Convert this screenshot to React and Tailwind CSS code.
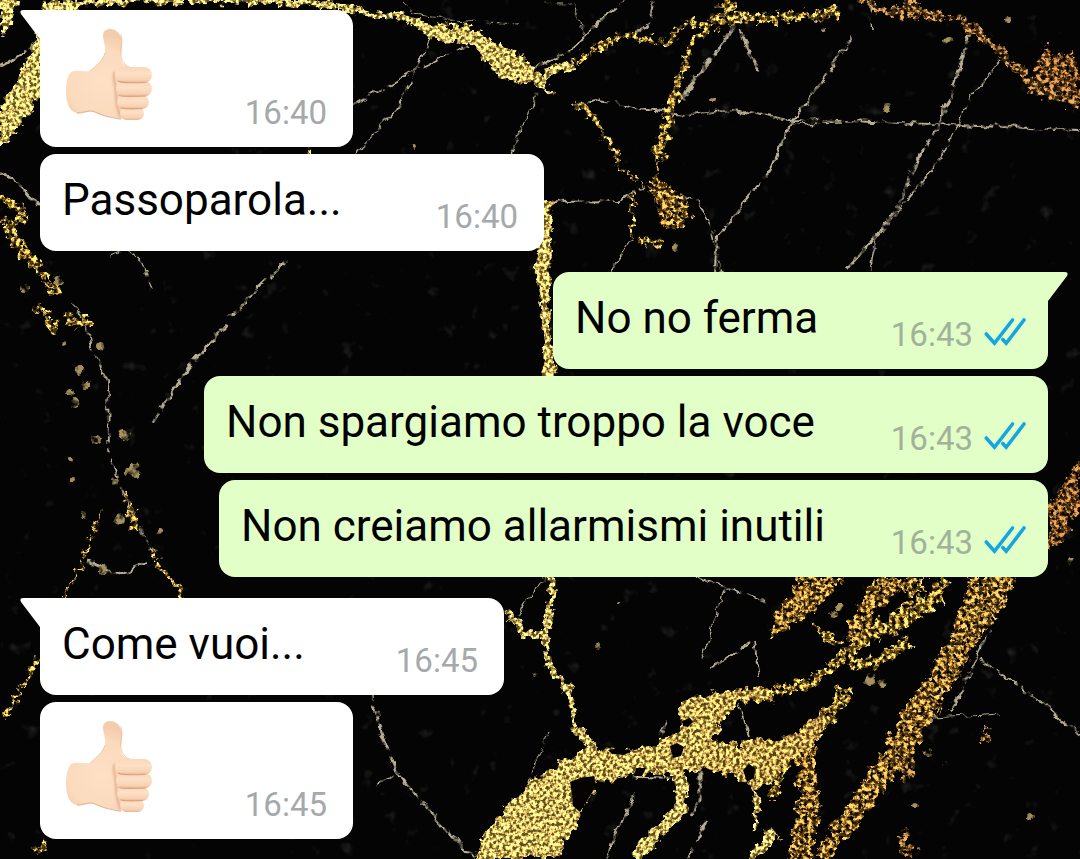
import React from "react";

/* ---------- Wallpaper: black marble with gold veins ---------- */

// Broad gold areas, drawn as closed shapes.
const goldShapes = [
  "M0 0H18L8 30L0 42Z",
  "M45 0H82L66 24L50 60L42 92L30 112L10 138L0 150V108L14 88L26 62L36 36Z",
  "M340 3L375 11L408 15L440 25L475 27L500 44L530 63L541 78L536 84L510 82L490 65L470 44L430 38L405 20L370 17L340 10Z",
  "M541 200H553L551 250L550 300L556 376H544L541 300L534 272L538 245Z",
  "M475 859L482 838L508 802L538 776L568 758L592 745L628 752L655 746L680 728L678 706L694 696L730 690L772 687V699L738 702L720 722L713 742L740 744L775 738L800 732L812 716L826 720L815 748L790 760L772 784L752 790L735 776L700 768L680 776L630 776L598 782L582 812L556 859Z",
];
const bronzeShapes = [
  "M650 180L665 182L680 196L691 214L688 226L674 233L662 225L658 205L646 192Z",
  "M796 738L815 735L814 768L820 806L812 859H788L796 820L799 790Z",
  "M970 577H1016L1000 612L972 652L942 702L902 768L852 832L828 859H814L832 826L874 766L912 696L944 650L960 612Z",
  "M800 577H846L828 596L806 618L786 628L768 642L778 612Z",
  "M876 577H922L896 594L874 612L862 650L846 662L850 622Z",
];
const rustShapes = [
  "M1080 455V508L1062 540L1048 552V506L1066 482Z",
  "M1044 44L1054 58L1074 50L1080 84V106L1052 100L1032 94L1014 72L1034 74Z",
];

// Gold lines: [path, width]
const goldLines = [
  ["M70 4Q200 -6 345 6", 7],
  ["M540 82L560 66L575 66", 9],
  ["M535 82L554 95", 4],
  ["M552 577L550 610L544 640", 8],
  ["M506 612L515 620L522 632L544 638L548 664L564 684L572 704L575 728L592 746", 6],
  ["M566 684L572 706", 9],
  ["M680 776L682 808L660 830L636 859", 12],
  ["M775 832L750 859", 12],
  ["M745 775L757 802L755 832", 5],
];
const bronzeLines = [
  ["M575 64L600 46L625 35L650 40L668 44L676 30L690 23L712 26", 6],
  ["M575 103L595 117L604 136L615 148L618 165", 5],
  ["M618 162L640 184L652 188", 2],
  ["M710 24L692 44L682 70L673 104", 6],
  ["M676 92L666 128L658 156", 12],
  ["M660 150L656 182", 4],
  ["M632 190V240", 4],
  ["M640 240L662 246", 6],
  ["M700 30L728 16L765 18L800 16L838 13", 11],
  ["M722 0L732 12", 16],
  ["M944 577L930 606L896 628L866 640L842 658L812 682L762 697", 11],
  ["M940 596L900 616L870 638", 16],
  ["M910 640L880 660L850 664", 10],
  ["M846 686L836 706L816 730", 14],
  ["M812 625L842 646", 5],
  ["M770 797L784 762L800 744", 12],
  ["M905 590L925 586", 12],
  ["M15 236L34 262L56 294", 7],
  ["M0 196L26 216L8 224L26 260", 9],
  ["M34 305L48 316L56 334", 7],
  ["M65 320L92 324", 9],
  ["M124 492L136 520", 5],
  ["M130 512L136 530", 9],
  ["M150 550L165 572L186 600", 5],
  ["M102 512L82 560L64 600", 3],
  ["M38 658L22 688L4 718", 5],
  ["M48 840L36 852", 7],
  ["M310 145V156", 8],
];
const rustLines = [
  ["M860 -2L886 12L930 15L962 20", 9],
  ["M900 4L918 10", 14],
  ["M962 20L992 44L1010 62L1040 88L1080 106", 9],
  ["M982 735L990 736", 16],
  ["M905 740L908 780", 12],
  ["M904 830L906 859", 9],
  ["M970 600L945 660L900 730", 8],
];

// Thin pale cracks: [path, width]
const cracks = [
  ["M0 66L20 55L38 42", 3],
  ["M0 172L18 182L38 206", 2.5],
  ["M402 0L414 14L450 20L520 24", 1],
  ["M468 45L420 68L353 106", 1.8],
  ["M428 40L414 76L396 110L356 154", 1.8],
  ["M538 90L522 128L512 154", 1.5],
  ["M532 70L574 48L600 20L626 0", 2.4],
  ["M584 34L574 4H545", 1],
  ["M654 0L648 22L636 34", 2],
  ["M573 105L600 100L640 108L690 115L732 110L790 120L846 121L930 124L1080 130", 2.2],
  ["M790 124L842 123", 1.5],
  ["M742 16L714 56L696 76L682 100", 3.5],
  ["M740 30L750 54L760 72", 3],
  ["M852 38L816 90L792 120L770 172L740 206L718 236L716 272", 2.2],
  ["M868 0L872 30", 1.5],
  ["M970 34L952 90L936 130L914 165L900 205L885 225L848 270", 3],
  ["M1002 58L968 102L944 152L920 186L900 210L876 240L870 272", 1.5],
  ["M680 196L698 200L712 230L722 272", 1.5],
  ["M553 202L620 201L630 192L646 188", 2],
  ["M632 238L610 272", 1.5],
  ["M286 262L252 294L222 328L188 368L153 422", 3],
  ["M110 256L128 249L142 262L150 290", 1.2],
  ["M70 300L84 318L94 355L108 380L109 450L122 492L136 520L152 552", 1.8],
  ["M88 562L120 574L146 562", 3],
  ["M370 690L380 730L396 770L420 800L450 834L474 859", 2.6],
  ["M376 784L396 776", 2],
  ["M545 577L518 614", 1.5],
  ["M528 782L550 732", 1.2],
  ["M636 792L604 859", 1.8],
  ["M660 736L668 722", 3],
  ["M695 577L735 590L765 600", 1.8],
  ["M726 585L702 660", 1.2],
  ["M750 642L710 670", 2.2],
  ["M755 640L760 678", 1.8],
  ["M738 704L750 736", 1.8],
  ["M700 770V800L690 816", 3],
  ["M980 660L1040 700L1080 736", 2],
  ["M990 630L950 712", 2.4],
  ["M934 718L1000 714", 1],
  ["M600 776L680 778", 2],
  ["M688 859L706 820", 2.4],
  ["M970 600L988 620", 2],
];

const specks = [
  [80, 370, 5], [86, 384, 4], [70, 392, 3], [74, 402, 5], [101, 346, 4], [96, 440, 5],
  [125, 434, 6], [134, 470, 7], [126, 474, 3], [70, 460, 3], [72, 478, 3], [116, 481, 4],
  [120, 520, 5], [83, 516, 3], [160, 532, 3], [104, 570, 4], [24, 288, 4], [58, 280, 4],
  [54, 244, 3], [64, 343, 2], [618, 604, 2], [597, 645, 3], [535, 675, 2], [676, 248, 4],
  [887, 108, 4], [948, 40, 4], [1008, 20, 3], [825, 30, 3], [712, 100, 3], [916, 806, 3],
  [945, 763, 2], [1030, 818, 3], [918, 850, 2], [240, 558, 2], [414, 148, 2], [376, 15, 3],
  [838, 608, 4], [832, 616, 4], [870, 680, 5], [882, 682, 4], [930, 720, 3], [928, 752, 4],
  [1072, 560, 3],
];

// Dark islands inside the gold mass.
const holes = [
  "M570 782L580 778L594 776L596 786L590 796L580 812L573 806L572 794Z",
  "M670 746L677 743L684 747L681 756L673 758Z",
  "M682 721L690 718L693 722L688 727L683 726Z",
  "M608 750L620 748L632 751L624 755L612 754Z",
  "M636 768L646 768L642 776H634Z",
  "M743 770L749 764L755 768L754 778L747 782Z",
  "M702 768L712 770L716 800L708 790Z",
];

function Marble() {
  return (
    <svg
      className="absolute inset-0 h-full w-full"
      viewBox="0 0 1080 859"
      preserveAspectRatio="xMidYMid slice"
      aria-hidden="true"
    >
      <defs>
        <filter id="glitter" filterUnits="userSpaceOnUse" x="0" y="0" width="1080" height="859" colorInterpolationFilters="sRGB">
          <feTurbulence type="fractalNoise" baseFrequency="0.11" numOctaves="3" seed="4" result="warp" />
          <feDisplacementMap in="SourceGraphic" in2="warp" scale="15" xChannelSelector="R" yChannelSelector="G" result="shape" />
          <feTurbulence type="fractalNoise" baseFrequency="0.3" numOctaves="2" seed="9" result="grain" />
          <feColorMatrix in="grain" type="matrix" values="3.4 0 0 0 -1.2  3.4 0 0 0 -1.2  3.4 0 0 0 -1.2  0 0 0 0 1" result="light" />
          <feComposite in="light" in2="shape" operator="arithmetic" k1="0.85" k2="0.22" k3="0.46" k4="-0.03" result="lit" />
          <feComposite in="lit" in2="shape" operator="in" result="gilt" />
          <feGaussianBlur in="gilt" stdDeviation="0.5" />
        </filter>
        <filter id="flakes" filterUnits="userSpaceOnUse" x="0" y="0" width="1080" height="859" colorInterpolationFilters="sRGB">
          <feTurbulence type="fractalNoise" baseFrequency="0.11" numOctaves="3" seed="7" result="warp" />
          <feDisplacementMap in="SourceGraphic" in2="warp" scale="17" xChannelSelector="R" yChannelSelector="G" result="shape" />
          <feTurbulence type="fractalNoise" baseFrequency="0.24" numOctaves="3" seed="15" result="grain" />
          <feColorMatrix in="grain" type="matrix" values="4.6 0 0 0 -1.8  4.6 0 0 0 -1.85  4.6 0 0 0 -2  0 0 0 0 1" result="light" />
          <feComposite in="light" in2="shape" operator="arithmetic" k1="0.9" k2="0.16" k3="0.38" k4="-0.03" result="lit" />
          <feColorMatrix in="grain" type="matrix" values="0 0 0 0 1  0 0 0 0 1  0 0 0 0 1  0 5 0 0 -1.5" result="mask" />
          <feComposite in="lit" in2="shape" operator="in" result="cut" />
          <feComposite in="cut" in2="mask" operator="in" result="chips" />
          <feGaussianBlur in="chips" stdDeviation="0.5" />
        </filter>
        <filter id="crumble" filterUnits="userSpaceOnUse" x="0" y="0" width="1080" height="859" colorInterpolationFilters="sRGB">
          <feTurbulence type="fractalNoise" baseFrequency="0.09" numOctaves="3" seed="2" result="warp" />
          <feDisplacementMap in="SourceGraphic" in2="warp" scale="9" xChannelSelector="R" yChannelSelector="G" result="shape" />
          <feTurbulence type="fractalNoise" baseFrequency="0.12" numOctaves="3" seed="21" result="grain" />
          <feColorMatrix in="grain" type="matrix" values="0 0 0 0 1  0 0 0 0 1  0 0 0 0 1  4 0 0 0 -1.2" result="mask" />
          <feComposite in="shape" in2="mask" operator="in" result="broken" />
          <feGaussianBlur in="broken" stdDeviation="0.5" />
        </filter>
        <filter id="dust" filterUnits="userSpaceOnUse" x="0" y="0" width="1080" height="859" colorInterpolationFilters="sRGB">
          <feTurbulence type="fractalNoise" baseFrequency="0.05" numOctaves="3" seed="12" />
          <feColorMatrix type="matrix" values="0 0 0 0 0.42  0 0 0 0 0.42  0 0 0 0 0.4  4 0 0 0 -2.8" />
        </filter>
        <linearGradient id="gold" gradientUnits="userSpaceOnUse" x1="400" y1="0" x2="850" y2="0">
          <stop offset="0" stopColor="#e2c45c" />
          <stop offset="0.5" stopColor="#dcb452" />
          <stop offset="1" stopColor="#bd8e38" />
        </linearGradient>
      </defs>
      <rect width="1080" height="859" fill="#040404" />
      <rect width="1080" height="859" filter="url(#dust)" opacity="0.3" />
      <g filter="url(#crumble)" fill="none" stroke="#cdc3a4" strokeLinejoin="round" opacity="0.9">
        {cracks.map(([d, w]) => (
          <path key={d} d={d} strokeWidth={w} />
        ))}
        <g fill="#b8a266" stroke="none">
          {specks.map(([x, y, r]) => (
            <circle key={x + "-" + y} cx={x} cy={y} r={r} />
          ))}
        </g>
      </g>
      <g filter="url(#flakes)" fill="none" strokeLinejoin="round">
        {rustShapes.map((d) => (
          <path key={d} d={d} fill="#a06a30" />
        ))}
        {rustLines.map(([d, w]) => (
          <path key={d} d={d} stroke="#a07238" strokeWidth={w} />
        ))}
        {bronzeShapes.map((d) => (
          <path key={d} d={d} fill="#c4933e" />
        ))}
        {bronzeLines.map(([d, w]) => (
          <path key={d} d={d} stroke="#cda648" strokeWidth={w} />
        ))}
      </g>
      <g filter="url(#glitter)" fill="none" strokeLinejoin="round">
        {goldShapes.map((d) => (
          <path key={d} d={d} fill="url(#gold)" />
        ))}
        {goldLines.map(([d, w]) => (
          <path key={d} d={d} stroke="#d8b858" strokeWidth={w} />
        ))}
      </g>
      <g fill="#050403">
        {holes.map((d) => (
          <path key={d} d={d} />
        ))}
      </g>
    </svg>
  );
}

/* ---------- Icons ---------- */

function ThumbsUp() {
  return (
    <svg className="ml-[3px] h-[94px] w-[88px] shrink-0" viewBox="0 0 88 94" role="img" aria-label="👍🏻">
      <defs>
        <radialGradient id="skin" gradientUnits="userSpaceOnUse" cx="36" cy="54" r="48">
          <stop offset="0" stopColor="#fee0c6" />
          <stop offset="0.7" stopColor="#fbdabd" />
          <stop offset="1" stopColor="#f3ccac" />
        </radialGradient>
        <linearGradient id="finger" x1="0" y1="0" x2="0" y2="1">
          <stop offset="0" stopColor="#f9d6b8" />
          <stop offset="0.4" stopColor="#fde0c6" />
          <stop offset="0.8" stopColor="#f8d2b3" />
          <stop offset="1" stopColor="#e8b696" />
        </linearGradient>
        <filter id="soft" x="-30%" y="-10%" width="160%" height="120%">
          <feGaussianBlur stdDeviation="1.3" />
        </filter>
      </defs>
      <path
        d="M45 1C52 1 57 7 57 15C57 22 55 27 56 31C57 36 62 39 67 40L77 60V90C72 92 62 92 55 90C46 90 38 88 30 84C24 81 20 85 12 85C4 84 1 74 1 63C1 52 4 44 8 43C14 42 20 44 25 43C31 38 38 32 40 25C41 18 38 12 38 8C38 3 41 1 45 1Z"
        fill="url(#skin)"
      />
      <path d="M25 43C31 38 38 32 40 25" fill="none" stroke="#e5b18c" strokeWidth="1" opacity="0.6" />
      <path d="M12 85C20 85 24 81 30 84C38 88 46 90 56 91" fill="none" stroke="#dda27e" strokeWidth="1.3" opacity="0.7" />
      <path d="M56 6Q58 12 56 22Q54 35 66 40" fill="none" stroke="#e5b18c" strokeWidth="1" opacity="0.6" />
      <path d="M50 44C47 50 51 56 51 64C51 72 52 82 56 89" fill="none" stroke="#d89c78" strokeWidth="2.4" opacity="0.7" filter="url(#soft)" />
      <rect x="55" y="79" width="24" height="13" rx="6.5" fill="url(#finger)" />
      <rect x="52" y="67" width="32" height="14" rx="7" fill="url(#finger)" />
      <rect x="51" y="53" width="36" height="15.5" rx="7.7" fill="url(#finger)" />
      <rect x="50" y="39" width="37" height="16" rx="8" fill="url(#finger)" />
      <g fill="none" stroke="#d09472" strokeWidth="1.1" strokeLinecap="round" opacity="0.7">
        <path d="M53 53Q57 55.5 80 54.5" />
        <path d="M54 67.5Q60 69 80 68" />
        <path d="M56 80Q62 81.5 77 80.5" />
      </g>
    </svg>
  );
}

function ReadTicks() {
  return (
    <svg className="mb-[7px] ml-2.5 h-[30px] w-[43px] shrink-0" viewBox="0 0 43 30" role="img" aria-label="Letto">
      <g fill="none" stroke="#16a5e0" strokeWidth="3.6" strokeLinecap="round" strokeLinejoin="miter">
        <path d="M3.2 17L11.5 26.3L29.5 3" />
        <path d="M19.8 22.5L23.2 26.3L41 3" />
      </g>
    </svg>
  );
}

function Tail({ side }) {
  return side === "in" ? (
    <svg className="absolute top-0 -left-5 h-[30px] w-[21px]" viewBox="0 0 21 30" aria-hidden="true">
      <path d="M21 0H3Q-1 0 1 4L20 29V30H21Z" fill="#ffffff" />
    </svg>
  ) : (
    <svg className="absolute top-0 -right-5 h-[30px] w-[21px]" viewBox="0 0 21 30" aria-hidden="true">
      <path d="M0 0H18Q22 0 20 4L1 29V30H0Z" fill="#e1ffc7" />
    </svg>
  );
}

/* ---------- Messages ---------- */

const groups = [
  {
    side: "in",
    messages: [
      { emoji: true, time: "16:40", width: "w-[313px]" },
      { text: "Passoparola...", time: "16:40", width: "w-[504px]" },
    ],
  },
  {
    side: "out",
    messages: [
      { text: "No no ferma", time: "16:43", width: "w-[495px]" },
      { text: "Non spargiamo troppo la voce", time: "16:43", width: "w-[844px]" },
      { text: "Non creiamo allarmismi inutili", time: "16:43", width: "w-[829px]" },
    ],
  },
  {
    side: "in",
    messages: [
      { text: "Come vuoi...", time: "16:45", width: "w-[464px]" },
      { emoji: true, time: "16:45", width: "w-[313px]" },
    ],
  },
];

function Bubble({ message, side, first }) {
  const incoming = side === "in";
  const tone = incoming ? "bg-white pr-[26px]" : "bg-[#e1ffc7] pr-[22px]";
  const corner = first ? (incoming ? "rounded-tl-none" : "rounded-tr-none") : "";
  const top = message.emoji ? "min-h-[137px] pt-[18px]" : "min-h-[97px] pt-5";
  return (
    <li className={`relative flex max-w-full justify-between rounded-2xl pb-[15px] pl-[22px] ${message.width} ${tone} ${corner} ${top}`}>
      {first && <Tail side={side} />}
      {message.emoji ? (
        <ThumbsUp />
      ) : (
        <p className="text-[44px] leading-[52px] text-black">{message.text}</p>
      )}
      <div className="flex shrink-0 items-end self-end">
        <time className={`text-[33px] leading-[39px] ${incoming ? "text-[#a4a9ac]" : "text-[#a3b19b]"}`}>
          {message.time}
        </time>
        {!incoming && <ReadTicks />}
      </div>
    </li>
  );
}

export default function App() {
  return (
    <main className="relative min-h-screen overflow-hidden bg-black font-[Roboto,sans-serif]">
      <Marble />
      <div className="relative flex flex-col gap-[21px] pt-2.5 pr-8 pb-5 pl-10">
        {groups.map((group, g) => (
          <ul key={g} className={`flex flex-col gap-[7px] ${group.side === "in" ? "items-start" : "items-end"}`}>
            {group.messages.map((message, m) => (
              <Bubble key={m} message={message} side={group.side} first={m === 0} />
            ))}
          </ul>
        ))}
      </div>
    </main>
  );
}
